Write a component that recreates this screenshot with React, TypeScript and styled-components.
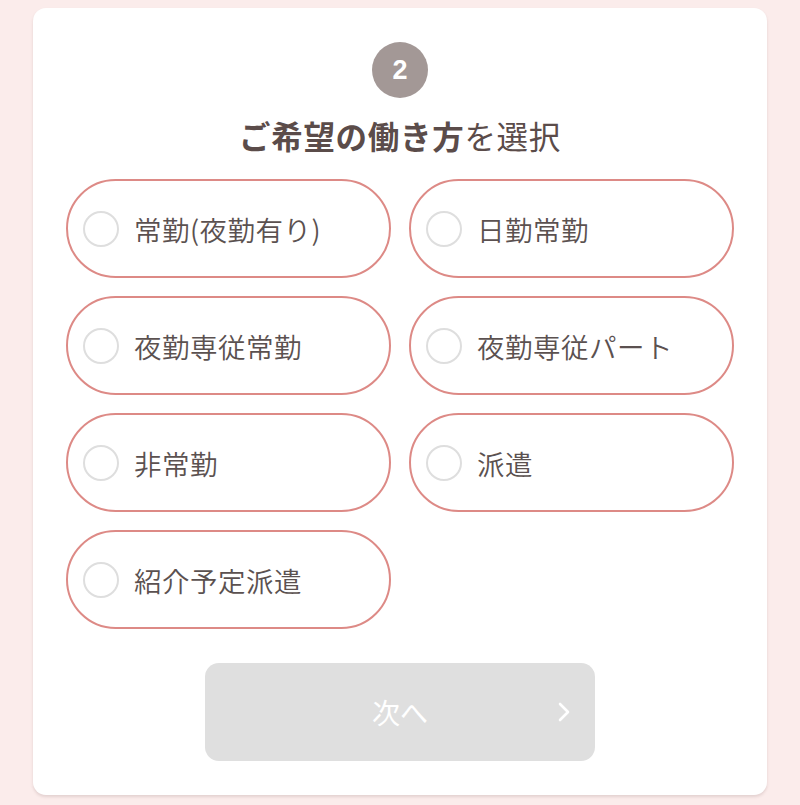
import styled, { createGlobalStyle } from "styled-components";

const GlobalStyle = createGlobalStyle`
  html, body {
    margin: 0;
    padding: 0;
    background: #fbeceb;
  }
  body {
    font-family: "Noto Sans CJK JP", "Noto Sans", sans-serif;
  }
`;

const Page = styled.div`
  padding: 8px 33px 10px;
  min-height: 805px;
  box-sizing: border-box;
`;

const Card = styled.div`
  background: #ffffff;
  border-radius: 13px;
  box-shadow: 0 2px 3px rgba(120, 90, 90, 0.18);
  padding: 34px 33px 34px;
  display: flex;
  flex-direction: column;
  align-items: center;
`;

const Step = styled.div`
  width: 56px;
  height: 56px;
  border-radius: 50%;
  background: #a39896;
  color: #ffffff;
  font-family: "Liberation Sans", Arial, sans-serif;
  font-weight: 700;
  font-size: 27px;
  display: flex;
  align-items: center;
  justify-content: center;
`;

const Title = styled.h2`
  margin: 17px 0 0;
  font-size: 31.5px;
  line-height: 40px;
  font-weight: 400;
  color: #5b4c4a;
  letter-spacing: 0.7px;
  b {
    font-weight: 700;
  }
`;

const Options = styled.div`
  margin-top: 24px;
  width: 100%;
  display: grid;
  grid-template-columns: 1fr 1fr;
  gap: 18px;
`;

const Option = styled.label`
  height: 99px;
  box-sizing: border-box;
  border: 2px solid #dd8a86;
  border-radius: 50px;
  display: flex;
  align-items: center;
  padding-left: 15px;
  gap: 15px;
  cursor: pointer;
  color: #5b5150;
  font-size: 27.5px;
  font-weight: 350;
  letter-spacing: 0.5px;
`;

const Radio = styled.span`
  width: 36px;
  height: 36px;
  border-radius: 50%;
  border: 2px solid #dedede;
  box-sizing: border-box;
  flex-shrink: 0;
`;

const NextButton = styled.button`
  margin-top: 34px;
  width: 390px;
  height: 98px;
  border: none;
  border-radius: 14px;
  background: #dfdfdf;
  color: #ffffff;
  font-family: "Noto Sans CJK JP", sans-serif;
  font-size: 28px;
  font-weight: 400;
  display: flex;
  align-items: center;
  justify-content: center;
  position: relative;
`;

const Chevron = styled.svg`
  position: absolute;
  right: 24px;
  top: 50%;
  transform: translateY(-50%);
`;

const options = [
  "常勤(夜勤有り)",
  "日勤常勤",
  "夜勤専従常勤",
  "夜勤専従パート",
  "非常勤",
  "派遣",
  "紹介予定派遣",
];

export default function App() {
  return (
    <Page>
      <GlobalStyle />
      <Card>
        <Step>2</Step>
        <Title>
          <b>ご希望の働き方</b>を選択
        </Title>
        <Options>
          {options.map((o) => (
            <Option key={o}>
              <Radio />
              {o}
            </Option>
          ))}
        </Options>
        <NextButton disabled>
          次へ
          <Chevron width="14" height="22" viewBox="0 0 14 22">
            <path
              d="M3 3 L11 11 L3 19"
              fill="none"
              stroke="#ffffff"
              strokeWidth="2.6"
              strokeLinecap="round"
              strokeLinejoin="round"
            />
          </Chevron>
        </NextButton>
      </Card>
    </Page>
  );
}
